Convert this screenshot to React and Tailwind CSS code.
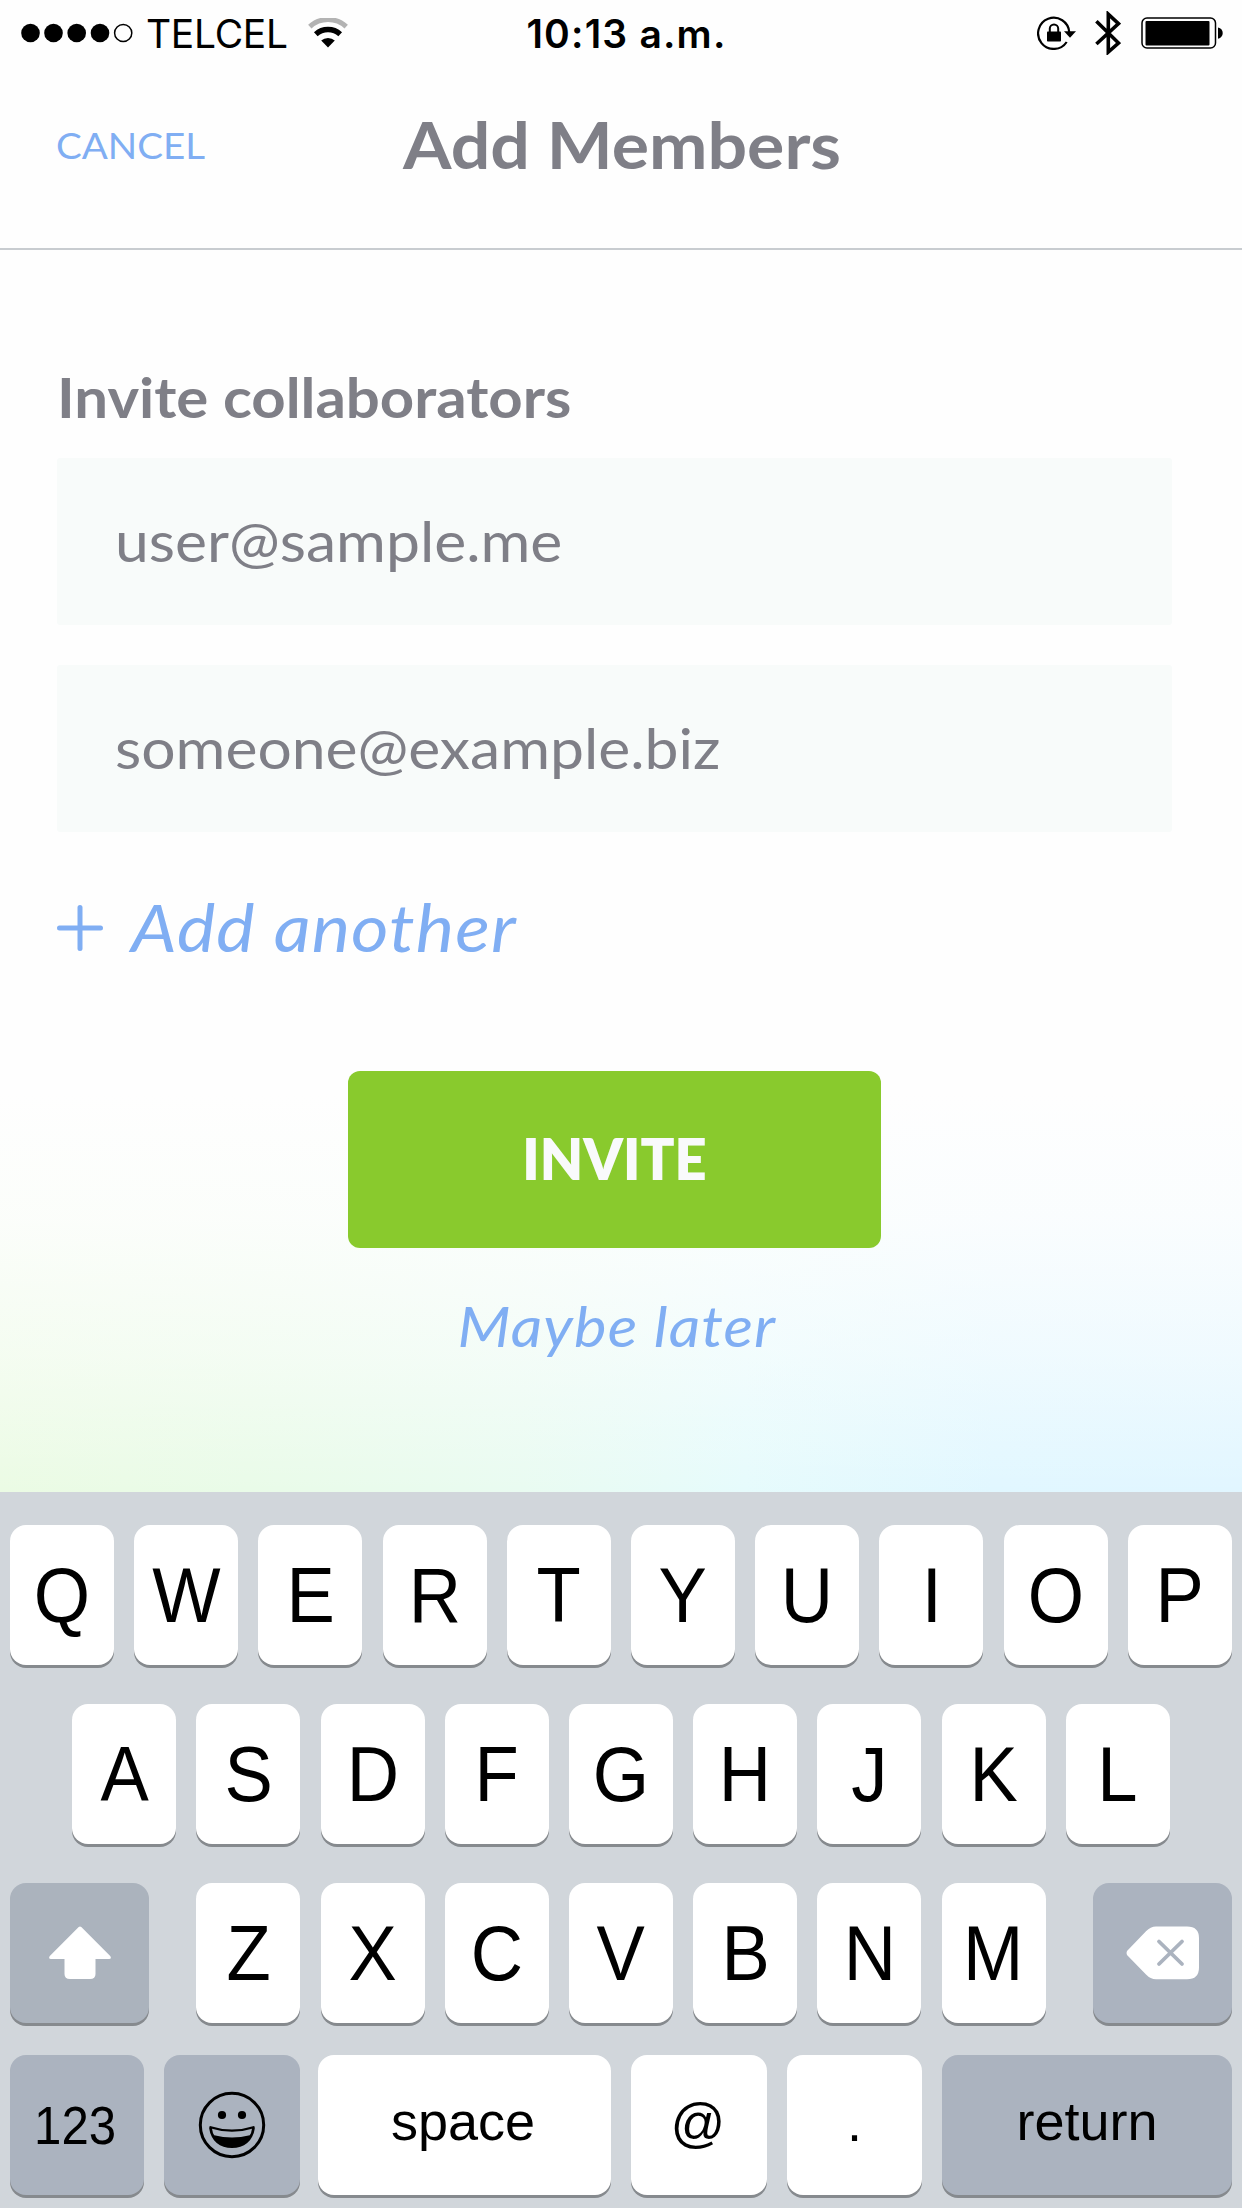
function SignalDots() {
  return (
    <svg className="h-5 w-[112px]" viewBox="0 0 112 20">
      {[9.5, 32.5, 55.7, 79].map((x) => (
        <circle key={x} cx={x} cy="10" r="9.3" fill="#000" />
      ))}
      <circle cx="102.2" cy="10" r="8.6" fill="none" stroke="#000" strokeWidth="1.5" />
    </svg>
  );
}

function WifiIcon() {
  return (
    <svg className="h-[30px] w-10" viewBox="0 0 40 30" fill="none">
      <path d="M1.8 8.6 A27 27 0 0 1 38.2 8.6" stroke="#b3b3b3" strokeWidth="5" />
      <path d="M7.8 16.2 A18 18 0 0 1 32.2 16.2" stroke="#000" strokeWidth="5.4" />
      <path d="M13.2 22.6 A10 10 0 0 1 26.8 22.6 L20 29.5 Z" fill="#000" />
    </svg>
  );
}

function RotationLockIcon() {
  return (
    <svg className="h-[34px] w-[39px]" viewBox="0 0 39 34" fill="none">
      <path d="M32.3 16.5 A15.6 15.6 0 1 0 29.7 26" stroke="#000" strokeWidth="2.2" />
      <path d="M27 15.3 H39 L33 21.8 Z" fill="#000" />
      <rect x="10" y="15.5" width="14" height="10" rx="0.8" fill="#000" />
      <path d="M12.8 16 V12.6 A4.2 4.2 0 0 1 21.2 12.6 V16" stroke="#000" strokeWidth="2" />
    </svg>
  );
}

function BluetoothIcon() {
  return (
    <svg className="h-11 w-[26px]" viewBox="0 0 26 44" fill="none">
      <path d="M1.4 10.3 L23.5 32 L13.3 41 V3.2 L23.5 12.7 L1.4 33" stroke="#000" strokeWidth="3.6" />
    </svg>
  );
}

function BatteryIcon() {
  return (
    <svg className="h-8 w-[82px]" viewBox="0 0 82 32" fill="none">
      <rect x="1" y="1" width="73.5" height="30" rx="5" stroke="#000" strokeWidth="1.5" />
      <rect x="4.5" y="4" width="64" height="24.5" rx="1" fill="#000" />
      <path d="M77 10.5 C83.3 11.5 83.3 20.5 77 21.8 Z" fill="#000" />
    </svg>
  );
}

function ShiftIcon() {
  return (
    <svg className="h-[54px] w-[62px]" viewBox="0 0 62 54">
      <path
        d="M29.7 1.1 Q31 0 32.3 1.1 L61.2 30 Q63 33 60 33 H46.5 V48 Q46.5 53 41 53 H21 Q15.5 53 15.5 48 V33 H2 Q-1 33 0.8 30 Z"
        fill="#fff"
      />
    </svg>
  );
}

function BackspaceIcon() {
  return (
    <svg className="h-[54px] w-[74px]" viewBox="0 0 74 54">
      <path
        d="M1 25 Q0 27 1 29 L20 48.5 Q24.5 53.3 30 53.3 H61 Q73 53.3 73 41.5 V12 Q73 0.5 61 0.5 H30 Q24.5 0.5 20 5.2 Z"
        fill="#fff"
      />
      <path d="M33 15.5 L56 38 M56 15.5 L33 38" stroke="#abb3bf" strokeWidth="3.8" strokeLinecap="round" />
    </svg>
  );
}

function EmojiIcon() {
  return (
    <svg className="h-[68px] w-[68px]" viewBox="0 0 68 68">
      <circle cx="34" cy="34" r="31.7" fill="none" stroke="#000" strokeWidth="3" />
      <circle cx="24" cy="24" r="4.1" fill="#000" />
      <circle cx="44" cy="24" r="4.1" fill="#000" />
      <path
        d="M13 35.2 Q34 42 55 35.2 Q57 34.6 56.8 37.5 C55 50 46 57 34 57 C22 57 13 50 11.2 37.5 Q11 34.6 13 35.2 Z"
        fill="#000"
      />
      <path d="M14 37.7 Q34 44 54 37.7 Q53.4 42 51.8 44.3 Q34 48.8 16.2 44.3 Q14.6 42 14 37.7 Z" fill="#abb3bf" />
    </svg>
  );
}

const keyBase =
  "flex h-[140px] shrink-0 items-center justify-center rounded-[16px] shadow-[0_3px_0_#868a8e] font-['Liberation_Sans',Arial,sans-serif] text-black";

function LetterKey({ label }) {
  return (
    <button className={`${keyBase} w-[104px] bg-white text-[77px] leading-none`}>
      <span className="inline-block scale-x-[0.94]">{label}</span>
    </button>
  );
}

function LetterRow({ letters }) {
  return (
    <div className="flex gap-[20.2px]">
      {letters.split("").map((l) => (
        <LetterKey key={l} label={l} />
      ))}
    </div>
  );
}

function Keyboard() {
  return (
    <section className="h-[716px] overflow-hidden bg-[#d1d6db] px-[10px] pt-[33px]">
      <LetterRow letters="QWERTYUIOP" />
      <div className="mt-[39px] flex justify-center">
        <LetterRow letters="ASDFGHJKL" />
      </div>
      <div className="mt-[39px] flex justify-between">
        <button className={`${keyBase} w-[139px] bg-[#abb3bd]`}>
          <ShiftIcon />
        </button>
        <LetterRow letters="ZXCVBNM" />
        <button className={`${keyBase} w-[139px] bg-[#abb3bf]`}>
          <BackspaceIcon />
        </button>
      </div>
      <div className="mt-[32px] flex text-[54px] leading-none">
        <button className={`${keyBase} w-[134px] bg-[#abb3bf]`}>
          <span className="-ml-1 inline-block scale-x-[0.91]">123</span>
        </button>
        <button className={`${keyBase} ml-5 w-[136px] bg-[#abb3bf]`}>
          <EmojiIcon />
        </button>
        <button className={`${keyBase} ml-[18px] w-[293px] bg-white pb-[9px] pr-[3px]`}>space</button>
        <button className={`${keyBase} ml-5 w-[136px] bg-white pb-[7px] pr-[2px]`}>@</button>
        <button className={`${keyBase} ml-5 w-[135px] bg-white pb-[7px]`}>.</button>
        <button className={`${keyBase} ml-5 w-[290px] bg-[#abb3bf] pb-[9px]`}>return</button>
      </div>
    </section>
  );
}

function EmailField({ value }) {
  return (
    <div className="flex h-[167px] items-center rounded-[3px] bg-[#f8fbfa] pb-0.5 pl-[58px] text-[57px] leading-none">
      <span className="origin-left scale-x-[1.063]">{value}</span>
    </div>
  );
}

export default function App() {
  return (
    <div className="flex h-[2208px] w-[1242px] flex-col overflow-hidden bg-[#fefefe] font-['Lato',sans-serif] text-[#7f7f87]">
      <div className="grid h-[66px] grid-cols-[1fr_auto_1fr] items-center pl-[21px] pr-[19px] font-['Inter',sans-serif] text-[39px] leading-none text-black">
        <div className="flex items-center">
          <SignalDots />
          <span className="ml-[13px] tracking-[-0.3px]">TELCEL</span>
          <span className="ml-5">
            <WifiIcon />
          </span>
        </div>
        <span className="ml-[9px] font-semibold tracking-[1.2px]">10:13 a.m.</span>
        <div className="flex items-center justify-end">
          <RotationLockIcon />
          <span className="ml-[19px]">
            <BluetoothIcon />
          </span>
          <span className="ml-5">
            <BatteryIcon />
          </span>
        </div>
      </div>

      <header className="grid h-[184px] grid-cols-[1fr_auto_1fr] items-center border-b-2 border-[#c8ccd0] px-14 pb-[26px]">
        <button className="origin-left scale-x-[1.042] justify-self-start text-[37px] leading-none text-[#80aef3]">CANCEL</button>
        <h1 className="ml-[2px] scale-x-[1.074] text-[65px] font-bold leading-none">Add Members</h1>
      </header>

      <main className="flex h-[1242px] flex-col bg-[linear-gradient(to_bottom,#fefefe_68%,rgba(254,254,254,0.86)_78%,rgba(254,254,254,0.5)_89%,rgba(254,254,254,0)_100%),linear-gradient(to_right,#ebfbe4_0%,#e9fbe8_20%,#e9fbf1_42%,#e6fbfc_60%,#e1f7ff_80%,#e1f6ff_100%)] pl-[57px] pr-[70px] pt-[111px]">
        <h2 className="h-[72px] origin-left scale-x-[1.07] text-[56px] font-bold leading-[72px]">Invite collaborators</h2>
        <div className="mt-[25px] flex flex-col gap-10">
          <EmailField value="user@sample.me" />
          <EmailField value="someone@example.biz" />
        </div>
        <button className="mt-[55px] flex h-20 items-center text-[65px] italic leading-none tracking-[1px] text-[#80aef3]">
          <svg className="mt-[2px] h-[46px] w-[46px]" viewBox="0 0 46 46">
            <path d="M2.5 23 H43.5 M23 2.5 V43.5" stroke="#80aef3" strokeWidth="5" strokeLinecap="round" />
          </svg>
          <span className="ml-7 mt-px origin-left scale-x-[1.112]">Add another</span>
        </button>
        <button className="mt-[104px] flex h-[177px] w-[533px] items-center justify-center self-center rounded-[12px] bg-[#89ca2d] pb-px text-[56px] font-extrabold leading-none text-[#f9fafb]">
          INVITE
        </button>
        <button className="mt-[42px] h-[72px] self-center pl-1 text-[56px] italic leading-[72px] tracking-[1px] text-[#80aef3]">
          <span className="inline-block scale-x-[1.1]">Maybe later</span>
        </button>
      </main>

      <Keyboard />
    </div>
  );
}
